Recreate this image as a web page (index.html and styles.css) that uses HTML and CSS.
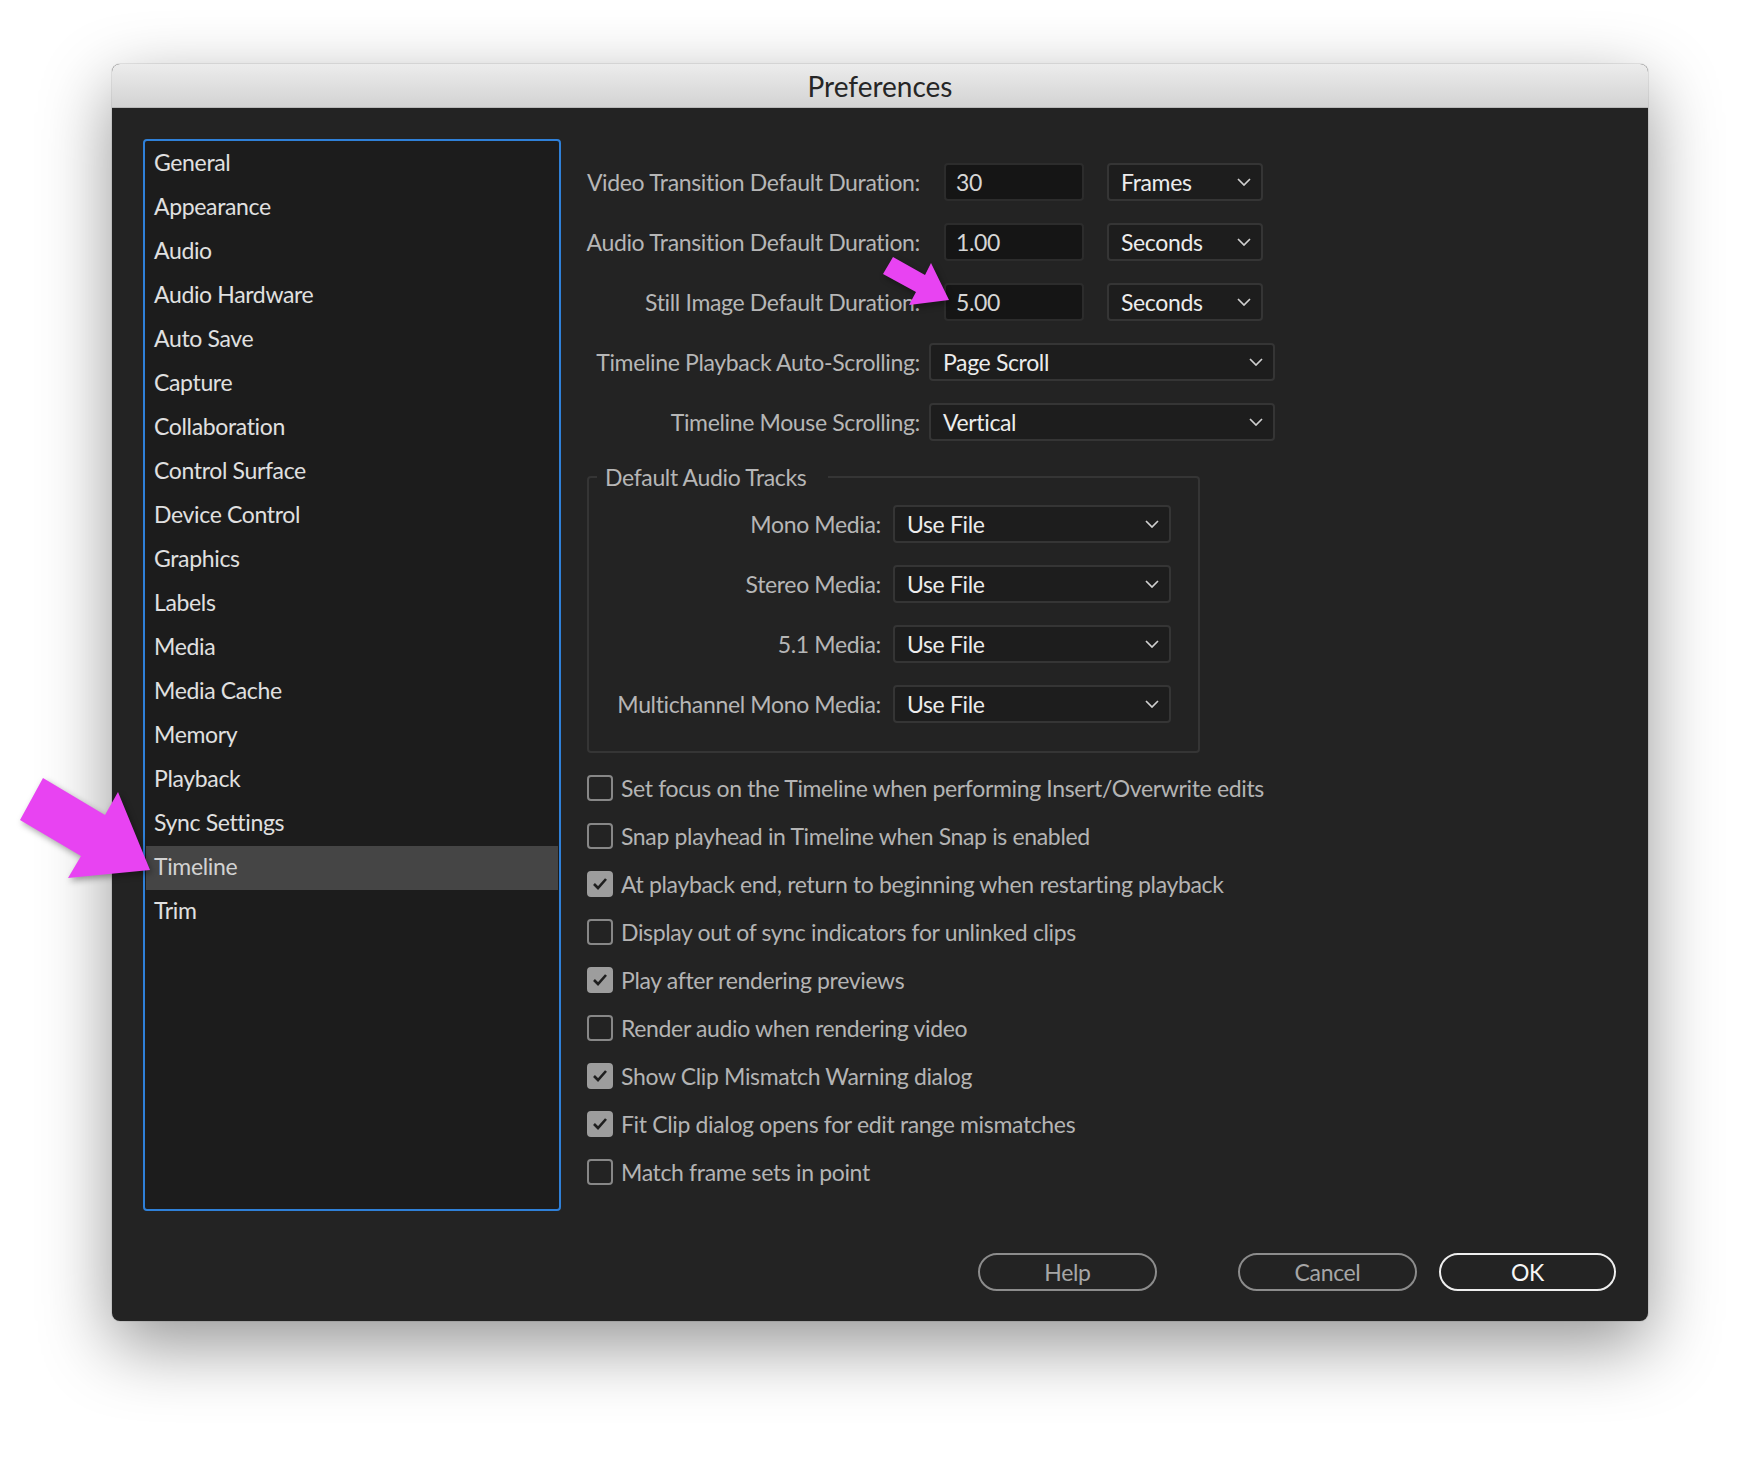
FILE: index.html
```html
<!DOCTYPE html>
<html lang="en">
<head>
  <meta charset="UTF-8" />
  <title>Preferences</title>
  <link rel="stylesheet" href="styles.css">
</head>
<body>
  <div class="page">
    <div class="dialog">
      <div class="titlebar">Preferences</div>

      <div class="dialog-body">
        <div class="main">
          <!-- Category list -->
          <ul class="sidebar">
            <li>General</li>
            <li>Appearance</li>
            <li>Audio</li>
            <li>Audio Hardware</li>
            <li>Auto Save</li>
            <li>Capture</li>
            <li>Collaboration</li>
            <li>Control Surface</li>
            <li>Device Control</li>
            <li>Graphics</li>
            <li>Labels</li>
            <li>Media</li>
            <li>Media Cache</li>
            <li>Memory</li>
            <li>Playback</li>
            <li>Sync Settings</li>
            <li class="selected">Timeline</li>
            <li>Trim</li>
          </ul>

          <!-- Timeline panel -->
          <div class="panel">
            <div class="field-row">
              <span class="label">Video Transition Default Duration:</span>
              <span class="input">30</span>
              <span class="select unit">Frames<svg class="chev" width="14" height="8" viewBox="0 0 14 8"><polyline points="1,1 7,7 13,1"/></svg></span>
            </div>
            <div class="field-row">
              <span class="label">Audio Transition Default Duration:</span>
              <span class="input">1.00</span>
              <span class="select unit">Seconds<svg class="chev" width="14" height="8" viewBox="0 0 14 8"><polyline points="1,1 7,7 13,1"/></svg></span>
            </div>
            <div class="field-row">
              <span class="label">Still Image Default Duration:</span>
              <span class="input">5.00</span>
              <span class="select unit">Seconds<svg class="chev" width="14" height="8" viewBox="0 0 14 8"><polyline points="1,1 7,7 13,1"/></svg></span>
            </div>
            <div class="field-row">
              <span class="label">Timeline Playback Auto-Scrolling:</span>
              <span class="select wide">Page Scroll<svg class="chev" width="14" height="8" viewBox="0 0 14 8"><polyline points="1,1 7,7 13,1"/></svg></span>
            </div>
            <div class="field-row">
              <span class="label">Timeline Mouse Scrolling:</span>
              <span class="select wide">Vertical<svg class="chev" width="14" height="8" viewBox="0 0 14 8"><polyline points="1,1 7,7 13,1"/></svg></span>
            </div>

            <fieldset class="group">
              <legend>Default Audio Tracks</legend>
              <div class="group-row">
                <span class="label">Mono Media:</span>
                <span class="select track">Use File<svg class="chev" width="14" height="8" viewBox="0 0 14 8"><polyline points="1,1 7,7 13,1"/></svg></span>
              </div>
              <div class="group-row">
                <span class="label">Stereo Media:</span>
                <span class="select track">Use File<svg class="chev" width="14" height="8" viewBox="0 0 14 8"><polyline points="1,1 7,7 13,1"/></svg></span>
              </div>
              <div class="group-row">
                <span class="label">5.1 Media:</span>
                <span class="select track">Use File<svg class="chev" width="14" height="8" viewBox="0 0 14 8"><polyline points="1,1 7,7 13,1"/></svg></span>
              </div>
              <div class="group-row">
                <span class="label">Multichannel Mono Media:</span>
                <span class="select track">Use File<svg class="chev" width="14" height="8" viewBox="0 0 14 8"><polyline points="1,1 7,7 13,1"/></svg></span>
              </div>
            </fieldset>

            <div class="checks">
              <div class="check"><span class="box"></span>Set focus on the Timeline when performing Insert/Overwrite edits</div>
              <div class="check"><span class="box"></span>Snap playhead in Timeline when Snap is enabled</div>
              <div class="check"><span class="box on"><svg width="18" height="16" viewBox="0 0 18 16"><polyline points="3,8 7,12 15,3"/></svg></span>At playback end, return to beginning when restarting playback</div>
              <div class="check"><span class="box"></span>Display out of sync indicators for unlinked clips</div>
              <div class="check"><span class="box on"><svg width="18" height="16" viewBox="0 0 18 16"><polyline points="3,8 7,12 15,3"/></svg></span>Play after rendering previews</div>
              <div class="check"><span class="box"></span>Render audio when rendering video</div>
              <div class="check"><span class="box on"><svg width="18" height="16" viewBox="0 0 18 16"><polyline points="3,8 7,12 15,3"/></svg></span>Show Clip Mismatch Warning dialog</div>
              <div class="check"><span class="box on"><svg width="18" height="16" viewBox="0 0 18 16"><polyline points="3,8 7,12 15,3"/></svg></span>Fit Clip dialog opens for edit range mismatches</div>
              <div class="check"><span class="box"></span>Match frame sets in point</div>
            </div>
          </div>
        </div>

        <div class="footer">
          <button class="btn help">Help</button>
          <button class="btn">Cancel</button>
          <button class="btn primary">OK</button>
        </div>
      </div>
    </div>
  </div>

  <!-- Callout arrows -->
  <svg class="callouts" width="1760" height="1482" viewBox="0 0 1760 1482">
    <polygon points="43,778 105,815 118,792 150,870 68,878 81,856 20,820"/>
    <polygon points="893,257 925,275 931,263 949,300 909,305 916,292 883,274"/>
  </svg>
</body>
</html>
```

FILE: styles.css
```css
body {
  margin: 0;
  background: #fff;
  font-family: Lato, "Liberation Sans", sans-serif;
  font-size: 23px;
  letter-spacing: -0.35px;
  width: 1760px;
  height: 1482px;
  position: relative;
  overflow: hidden;
}

.page {
  padding: 64px 0 0 112px;
}

.dialog {
  width: 1536px;
  height: 1257px;
  background: #232323;
  border-radius: 8px;
  box-shadow: 0 24px 70px rgba(0,0,0,0.42), 0 0 0 1px rgba(0,0,0,0.08);
  overflow: hidden;
}

.titlebar {
  height: 44px;
  line-height: 44px;
  text-align: center;
  font-size: 28px;
  letter-spacing: 0;
  color: #262626;
  background: linear-gradient(180deg, #ececec 0%, #d3d3d3 100%);
  border-bottom: 1px solid #b9b9b9;
  box-sizing: border-box;
}

.dialog-body {
  padding: 31px 32px 30px 31px;
}

.main {
  display: flex;
}

/* sidebar */
.sidebar {
  list-style: none;
  margin: 0;
  padding: 1px;
  width: 418px;
  height: 1072px;
  box-sizing: border-box;
  background: #1c1c1c;
  border: 2px solid #2f80d8;
  border-radius: 4px;
}

.sidebar li {
  height: 44px;
  line-height: 40px;
  padding: 0 0 4px 8px;
  box-sizing: border-box;
  color: #e0e0e0;
}

.sidebar li.selected {
  background: #454545;
  color: #d2d2d2;
}

/* right panel */
.panel {
  margin-left: 25px;
  padding-top: 24px;
}

.field-row {
  display: flex;
  align-items: center;
  height: 38px;
  margin-bottom: 22px;
}

.label {
  color: #b6b6b6;
  text-align: right;
  white-space: nowrap;
  flex: none;
}

.field-row .label {
  width: 334px;
}

.input {
  width: 140px;
  height: 38px;
  line-height: 34px;
  box-sizing: border-box;
  margin-left: 24px;
  padding-left: 10px;
  background: #151515;
  border: 2px solid #2c2c2c;
  border-radius: 4px;
  color: #d6d6d6;
}

.select {
  display: flex;
  align-items: center;
  justify-content: space-between;
  height: 38px;
  box-sizing: border-box;
  padding: 0 10px 0 12px;
  background: #1d1d1d;
  border: 2px solid #353535;
  border-radius: 4px;
  color: #ececec;
}

.select.unit {
  width: 156px;
  margin-left: 23px;
}

.select.wide {
  width: 346px;
  margin-left: 9px;
}

.select.track {
  width: 278px;
  margin-left: 12px;
}

.chev {
  fill: none;
  stroke: #cfcfcf;
  stroke-width: 1.7;
}

/* audio tracks group */
.group {
  width: 613px;
  box-sizing: border-box;
  margin: 16px 0 0 1px;
  padding: 14px 0 28px 8px;
  border: 2px solid #353535;
  border-radius: 4px;
  min-width: 0;
}

.group legend {
  padding: 0 22px 0 8px;
  line-height: 28px;
  color: #b6b6b6;
}

.group-row {
  display: flex;
  align-items: center;
  height: 38px;
  margin-bottom: 22px;
}

.group-row:last-child {
  margin-bottom: 0;
}

.group-row .label {
  width: 284px;
}

/* checkboxes */
.checks {
  display: flex;
  flex-direction: column;
  gap: 22px;
  margin-top: 22px;
}

.check {
  display: flex;
  align-items: center;
  height: 26px;
  color: #b4b4b4;
  white-space: nowrap;
}

.box {
  width: 26px;
  height: 26px;
  box-sizing: border-box;
  margin: 0 8px 0 1px;
  border: 2px solid #878787;
  border-radius: 4px;
  display: flex;
  align-items: center;
  justify-content: center;
  flex: none;
}

.box.on {
  background: #9d9d9d;
  border-color: #9d9d9d;
}

.box svg {
  fill: none;
  stroke: #1f1f1f;
  stroke-width: 2.6;
}

/* footer buttons */
.footer {
  display: flex;
  justify-content: flex-end;
  gap: 22px;
  margin-top: 42px;
}

.btn {
  width: 179px;
  height: 38px;
  box-sizing: border-box;
  background: transparent;
  border: 2px solid #8c8c8c;
  border-radius: 19px;
  color: #a6a6a6;
  font-family: Lato, "Liberation Sans", sans-serif;
  font-size: 23px;
  letter-spacing: -0.35px;
  padding: 0;
}

.btn.help {
  margin-right: 59px;
}

.btn.primary {
  width: 177px;
  border-color: #eeeeee;
  color: #f6f6f6;
}

/* annotation arrows */
.callouts {
  position: absolute;
  top: 0;
  left: 0;
  pointer-events: none;
}

.callouts polygon {
  fill: #e843f2;
  filter: drop-shadow(2px 3px 3px rgba(0,0,0,0.35));
}
```
